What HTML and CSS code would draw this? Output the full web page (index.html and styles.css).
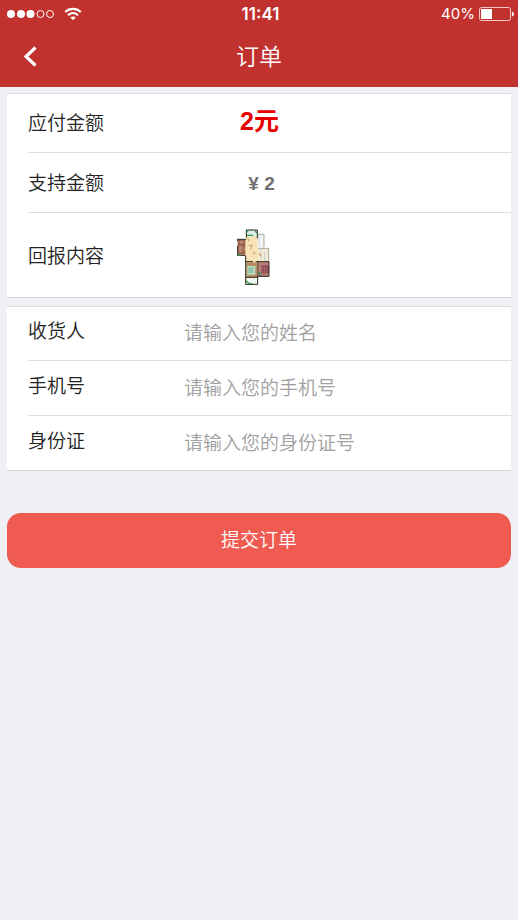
FILE: index.html
```html
<!DOCTYPE html>
<html lang="zh-CN">
<head>
<meta charset="utf-8">
<meta name="viewport" content="width=device-width, initial-scale=1">
<title>订单</title>
<link rel="stylesheet" href="styles.css">
</head>
<body>
<header class="header">
  <div class="status">
    <div class="status-left">
      <svg class="signal" viewBox="0 0 48 10" aria-hidden="true">
        <g fill="#fff"><circle cx="4" cy="5" r="4"/><circle cx="14" cy="5" r="4"/><circle cx="23.500" cy="5" r="4"/></g>
        <g fill="none" stroke="#fff"><circle cx="33.500" cy="5" r="3.500"/><circle cx="43" cy="5" r="3.500"/></g>
      </svg>
      <svg class="wifi" viewBox="0 0 18 14" aria-hidden="true">
        <path d="M1.200 5C5.600 .9 12.400 .9 16.800 5" fill="none" stroke="#fff" stroke-width="2.200"/>
        <path d="M4 8.200C7 5.400 11 5.400 14 8.200" fill="none" stroke="#fff" stroke-width="2"/>
        <path d="M6.300 10.500C7.800 9.100 10.200 9.100 11.700 10.500L9 13.300Z" fill="#fff"/>
      </svg>
    </div>
    <span class="time">11:41</span>
    <div class="status-right">
      <span>40%</span>
      <svg class="battery" viewBox="0 0 35 14" aria-hidden="true">
        <rect x=".5" y=".5" width="31" height="13" rx="2" fill="none" stroke="#f3c9c7"/>
        <path d="M2 2H13V12H2Z" fill="#fff"/>
        <path d="M33 4.500Q35 5 35 7T33 9.500Z" fill="#fff"/>
      </svg>
    </div>
  </div>
  <nav class="nav">
    <button class="back" type="button" aria-label="返回">
      <svg viewBox="0 0 14 22" aria-hidden="true"><path d="M12.500 1.500L3 10.500L12.500 19.500" fill="none" stroke="#fff" stroke-width="3.200"/></svg>
    </button>
    <h1 class="title">订单</h1>
  </nav>
</header>
<main class="content">
  <dl class="card summary">
    <div class="row"><dt>应付金额</dt><dd class="total">2元</dd></div>
    <div class="row"><dt>支持金额</dt><dd class="amount">¥ 2</dd></div>
    <div class="row row-tall"><dt>回报内容</dt><dd class="reward">
      <svg class="plan" viewBox="36 21 108 174" role="img" aria-label="户型图">
        <path d="M63 27H97V39H117V82H131V167H98V191H63V122H61V103H37V55H63Z" fill="#f7e3b6"/>
        <path d="M64 27H96V47H64Z" fill="#d9f0e2"/>
        <path d="M98 40H116V80H98Z" fill="#f4f5f6"/>
        <path d="M101 84H130V119H101Z" fill="#f5ead6"/>
        <path d="M38 56H61V101H38Z" fill="#97614d"/>
        <path d="M44 60H55V68H44ZM42 75H52V94H42ZM55 78H60V89H55Z" fill="#bd8875"/>
        <path d="M64 124H98V168H64Z" fill="#b98e62"/>
        <path d="M67 135H91V161H67Z" fill="#b9ddc2"/>
        <path d="M70 139H85V156H70Z" fill="#8fc6ad"/>
        <path d="M101 123H131V166H101Z" fill="#b98074"/>
        <path d="M109 133H131V157H109Z" fill="#8c4652"/>
        <path d="M113 136V155M119 136V155M125 136V155" stroke="#b6767c" stroke-width="2"/>
        <path d="M65 170H97V189H65Z" fill="#f0f4ee"/>
        <g fill="none" stroke="#26231e" stroke-width="3"><path d="M64 50V27H97V52M37 60V55H63M37 75V103H61M62 104V190H98V166H132V121M62 122H84M92 122H132M99 122V168M63 169H98"/><path d="M97 40H117V78M100 82H131V119" stroke-width="2" stroke="#79847b"/></g>
        <path d="M102 42V76M108 82V116M119 93V120" fill="none" stroke="#a7ccd2" stroke-width="2"/>
        <path d="M64 33L70 29M66 43H84M39 99L45 104M64 179L72 188H82M101 153L108 162M90 30L96 36" stroke="#38945a" stroke-width="4" fill="none"/>
        <path d="M67 52L73 60M71 73H81L77 85M84 94L91 98M102 98L109 104" fill="none" stroke="#d0a56c" stroke-width="4"/>
      </svg>
    </dd></div>
  </dl>
  <form class="form">
    <div class="card">
      <div class="row row-field"><label for="name">收货人</label><input id="name" type="text" placeholder="请输入您的姓名"></div>
      <div class="row row-field"><label for="phone">手机号</label><input id="phone" type="tel" placeholder="请输入您的手机号"></div>
      <div class="row row-field"><label for="idcard">身份证</label><input id="idcard" type="text" placeholder="请输入您的身份证号"></div>
    </div>
    <button class="submit" type="submit">提交订单</button>
  </form>
</main>
</body>
</html>
```
FILE: styles.css
```css
* { box-sizing: border-box; }
body {
  margin: 0;
  background: #efeff4;
  color: #222;
  font-family: "Liberation Sans", "Noto Sans CJK SC", sans-serif;
  font-size: 19px;
  font-weight: 350;
  line-height: 28px;
}
button, input { font: inherit; }
svg { display: block; }
.header { background: #c1322e; color: #fff; height: 87px; }
.status {
  display: grid;
  grid-template-columns: 1fr auto 1fr;
  align-items: center;
  height: 28px;
  padding: 0 4px 0 7px;
  font-family: Inter, sans-serif;
  font-size: 15px;
  font-weight: 400;
}
.status-left, .status-right { display: flex; align-items: center; }
.status-left { gap: 9px; }
.status-right { justify-content: flex-end; gap: 4px; }
.signal { width: 48px; height: 10px; }
.wifi { width: 18px; height: 14px; }
.battery { width: 35px; height: 14px; }
.time { font-size: 17px; font-weight: 600; }
.nav {
  display: grid;
  grid-template-columns: 60px 1fr 60px;
  align-items: center;
  height: 58px;
}
.back { display: flex; justify-content: center; padding: 0; border: 0; background: none; }
.back svg { width: 14px; height: 22px; }
.title { margin: 0; font-size: 23px; font-weight: 350; text-align: center; }
.content { padding: 6px 7px; }
.card {
  margin: 0;
  padding-left: 21px;
  background: #fff;
  border-bottom: 1px solid #d4d4d8;
  box-shadow: inset 0 1px #dcdce0;
}
.row {
  display: grid;
  grid-template-columns: 156px 1fr;
  align-items: center;
  box-sizing: content-box;
  height: 57px;
  padding-top: 2px;
}
.row + .row { border-top: 1px solid #dcdcdc; }
.row-tall { height: 80px; padding-top: 4px; }
.row-field { height: 51px; padding: 0 0 3px; }
dd {
  display: flex;
  justify-content: center;
  margin: 0;
  padding-right: 176px;
}
.total { padding-bottom: 6px; color: #e60000; font-size: 25px; font-weight: 700; }
.amount { padding-right: 172px; color: #6e6e6e; font-weight: 700; }
.reward { padding-right: 186px; }
.plan { width: 36px; height: 58px; }
.summary { margin-bottom: 8px; }
.row-field input {
  width: 100%;
  height: 36px;
  padding: 4px 0 0;
  border: 0;
  outline: 0;
  background: none;
  color: #222;
}
.row-field input::placeholder { color: #a0a0a0; opacity: 1; }
.submit {
  display: block;
  width: 100%;
  height: 55px;
  margin-top: 42px;
  border: 0;
  border-radius: 14px;
  background: #ef5b50;
  color: #fff;
}
```
